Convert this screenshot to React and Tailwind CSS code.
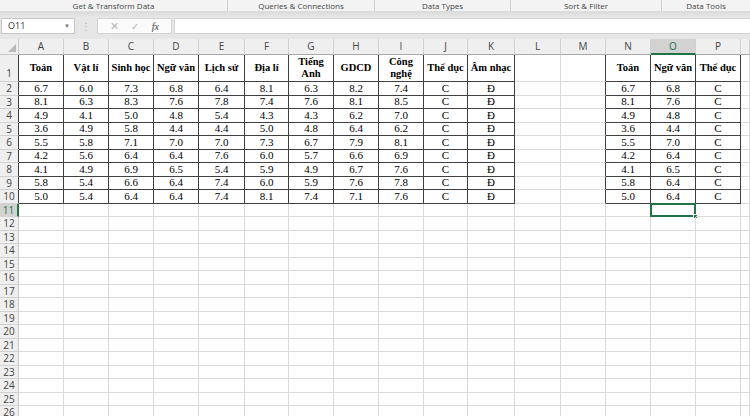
import React from 'react'

// the last column only shows a sliver at the window edge, so it has no label
const cols = [
	{ key: 'A', w: 'w-[45px]' },
	{ key: 'B', w: 'w-[45px]' },
	{ key: 'C', w: 'w-[45px]' },
	{ key: 'D', w: 'w-[45px]' },
	{ key: 'E', w: 'w-[46px]' },
	{ key: 'F', w: 'w-[44px]' },
	{ key: 'G', w: 'w-[45px]' },
	{ key: 'H', w: 'w-[45px]' },
	{ key: 'I', w: 'w-[45px]' },
	{ key: 'J', w: 'w-[44px]' },
	{ key: 'K', w: 'w-[47px]' },
	{ key: 'L', w: 'w-[46px]' },
	{ key: 'M', w: 'w-[45px]' },
	{ key: 'N', w: 'w-[45px]' },
	{ key: 'O', w: 'w-[45px]' },
	{ key: 'P', w: 'w-[45px]' },
	{ key: 'Q', w: 'flex-1', hideLabel: true },
]

const groups = [
	{ label: 'Get & Transform Data', w: 'w-[228px]' },
	{ label: 'Queries & Connections', w: 'w-[147px]' },
	{ label: 'Data Types', w: 'w-[136px]' },
	{ label: 'Sort & Filter', w: 'w-[151px]' },
	{ label: 'Data Tools', w: 'flex-1' },
]

const toan = ['6.7', '8.1', '4.9', '3.6', '5.5', '4.2', '4.1', '5.8', '5.0']
const van = ['6.8', '7.6', '4.8', '4.4', '7.0', '6.4', '6.5', '6.4', '6.4']
const C9 = Array(9).fill('C')

// sheet contents by column letter, row 1 is the header line
const sheet = {
	A: [['Toán'], ...toan],
	B: [['Vật lí'], '6.0', '6.3', '4.1', '4.9', '5.8', '5.6', '4.9', '5.4', '5.4'],
	C: [['Sinh học'], '7.3', '8.3', '5.0', '5.8', '7.1', '6.4', '6.9', '6.6', '6.4'],
	D: [['Ngữ văn'], ...van],
	E: [['Lịch sử'], '6.4', '7.8', '5.4', '4.4', '7.0', '7.6', '5.4', '7.4', '7.4'],
	F: [['Địa lí'], '8.1', '7.4', '4.3', '5.0', '7.3', '6.0', '5.9', '6.0', '8.1'],
	G: [['Tiếng', 'Anh'], '6.3', '7.6', '4.3', '4.8', '6.7', '5.7', '4.9', '5.9', '7.4'],
	H: [['GDCD'], '8.2', '8.1', '6.2', '6.4', '7.9', '6.6', '6.7', '7.6', '7.1'],
	I: [['Công', 'nghệ'], '7.4', '8.5', '7.0', '6.2', '8.1', '6.9', '7.6', '7.8', '7.6'],
	J: [['Thể dục'], ...C9],
	K: [['Âm nhạc'], ...Array(9).fill('Đ')],
	N: [['Toán'], ...toan],
	O: [['Ngữ văn'], ...van],
	P: [['Thể dục'], ...C9],
}

const tableCols = 'ABCDEFGHIJKNOP'
const rows = Array.from({ length: 26 }, (_, i) => i + 1)

function inTable(col, row) {
	return row <= 10 && tableCols.includes(col)
}

function Ribbon() {
	return <div>
		<div className="h-[11px] flex bg-[#f3f3f3] text-[8px] leading-[11px] text-[#444]">
			{groups.map((g, i) =>
				<div key={g.label} className={`${g.w} text-center ${i < groups.length - 1 ? 'border-r border-[#d0d0d0]' : ''}`}>
					{g.label}
				</div>
			)}
		</div>
		<div className="h-[7px] bg-gradient-to-b from-[#dadada] to-[#e8e8e8]"></div>
	</div>
}

function FormulaBar() {
	return <div className="h-[21px] flex items-start bg-[#e6e6e6] pl-[1px] text-[#333]" style={{ fontFamily: '"Open Sans", sans-serif' }}>
		<div className="w-[74px] h-[16px] bg-white border border-[#c6c6c6] flex items-center justify-between pl-[6px] pr-[4px]">
			<span className="text-[9px]">O11</span>
			<span className="text-[6px] text-[#777]">▼</span>
		</div>
		<div className="w-[22px] h-[16px] flex items-center justify-center text-[10px] text-[#b0b0b0]">⋮</div>
		<div className="w-[75px] h-[16px] bg-[#fafafa] border border-[#d2d2d2] flex items-center justify-around px-[6px]">
			<span className="text-[11px] text-[#b5b5b5]">✕</span>
			<span className="text-[10px] text-[#b5b5b5]">✓</span>
			<span className="text-[10px] italic text-[#444]" style={{ fontFamily: '"Liberation Serif", serif' }}>fx</span>
		</div>
		<div className="flex-1 h-[16px] ml-[2px] bg-white border-y border-l border-[#d2d2d2]"></div>
	</div>
}

function HeaderRow() {
	return <div className="flex h-[16px] bg-[#efefef] text-[10px] text-[#444]" style={{ fontFamily: '"Open Sans", sans-serif' }}>
		<div className="w-[19px] shrink-0 border-r border-b border-[#c8c8c8] relative">
			<svg className="absolute right-[2px] bottom-[2px]" width="8" height="8" viewBox="0 0 8 8">
				<path d="M8 0 L8 8 L0 8 Z" fill="#b9b9b9" />
			</svg>
		</div>
		{cols.map(c => {
			const sel = c.key === 'O'
			return <div key={c.key}
				className={`${c.w} shrink-0 flex items-center justify-center border-r border-r-[#d0d0d0] ${sel
					? 'bg-[#d2d2d2] text-[#217346] border-b-2 border-b-[#217346]'
					: 'border-b border-b-[#a9a9a9]'}`}>
				{c.hideLabel ? '' : c.key}
			</div>
		})}
	</div>
}

function RowHeader({ row }) {
	const sel = row === 11
	return <div
		className={`w-[19px] shrink-0 flex justify-center border-b border-b-[#d0d0d0] ${row === 1 ? 'items-end pb-[3px]' : 'items-center'} ${sel
			? 'bg-[#d2d2d2] text-[#217346] border-r-2 border-r-[#217346]'
			: `bg-[#efefef] text-[#444] border-r ${row <= 10 ? 'border-r-[#404040]' : 'border-r-[#c8c8c8]'}`}`}
		style={{ fontFamily: '"Open Sans", sans-serif' }}>
		<span className="text-[10px] leading-none">{row}</span>
	</div>
}

function Cell({ col, idx, row }) {
	const next = cols[idx + 1]
	const mine = inTable(col.key, row)
	const rightDark = mine || (next && inTable(next.key, row))
	const bottomDark = mine || inTable(col.key, row + 1)
	const value = sheet[col.key]?.[row - 1]
	const selected = col.key === 'O' && row === 11

	return <div className={`${col.w} shrink-0 relative flex items-center justify-center border-r border-b ${rightDark ? 'border-r-[#404040]' : 'border-r-[#dadada]'} ${bottomDark ? 'border-b-[#404040]' : 'border-b-[#dadada]'}`}>
		{Array.isArray(value) &&
			<span className="text-center font-bold text-[10.5px] leading-[12px] whitespace-nowrap">
				{value.map((line, i) => <span key={i} className="block">{line}</span>)}
			</span>}
		{typeof value === 'string' && <span className="text-[11px] leading-none">{value}</span>}
		{selected && <>
			<div className="absolute -left-[1px] -top-[1px] -right-[1px] -bottom-[1px] border-2 border-[#217346]"></div>
			<div className="absolute -right-[3px] -bottom-[3px] w-[5px] h-[5px] bg-[#217346] border border-white"></div>
		</>}
	</div>
}

function Grid() {
	return <div>
		<HeaderRow />
		{rows.map(row =>
			<div key={row} className={`flex ${row === 1 ? 'h-[27px]' : 'h-[13.5px]'} text-black`}
				style={{ fontFamily: '"Liberation Serif", serif' }}>
				<RowHeader row={row} />
				{cols.map((c, i) => <Cell key={c.key} col={c} idx={i} row={row} />)}
			</div>
		)}
	</div>
}

export default function App() {
	return (
		<div className="w-[750px] h-[416px] overflow-hidden bg-white" style={{ fontFamily: '"Open Sans", sans-serif' }}>
			<Ribbon />
			<FormulaBar />
			<Grid />
		</div>
	)
}
